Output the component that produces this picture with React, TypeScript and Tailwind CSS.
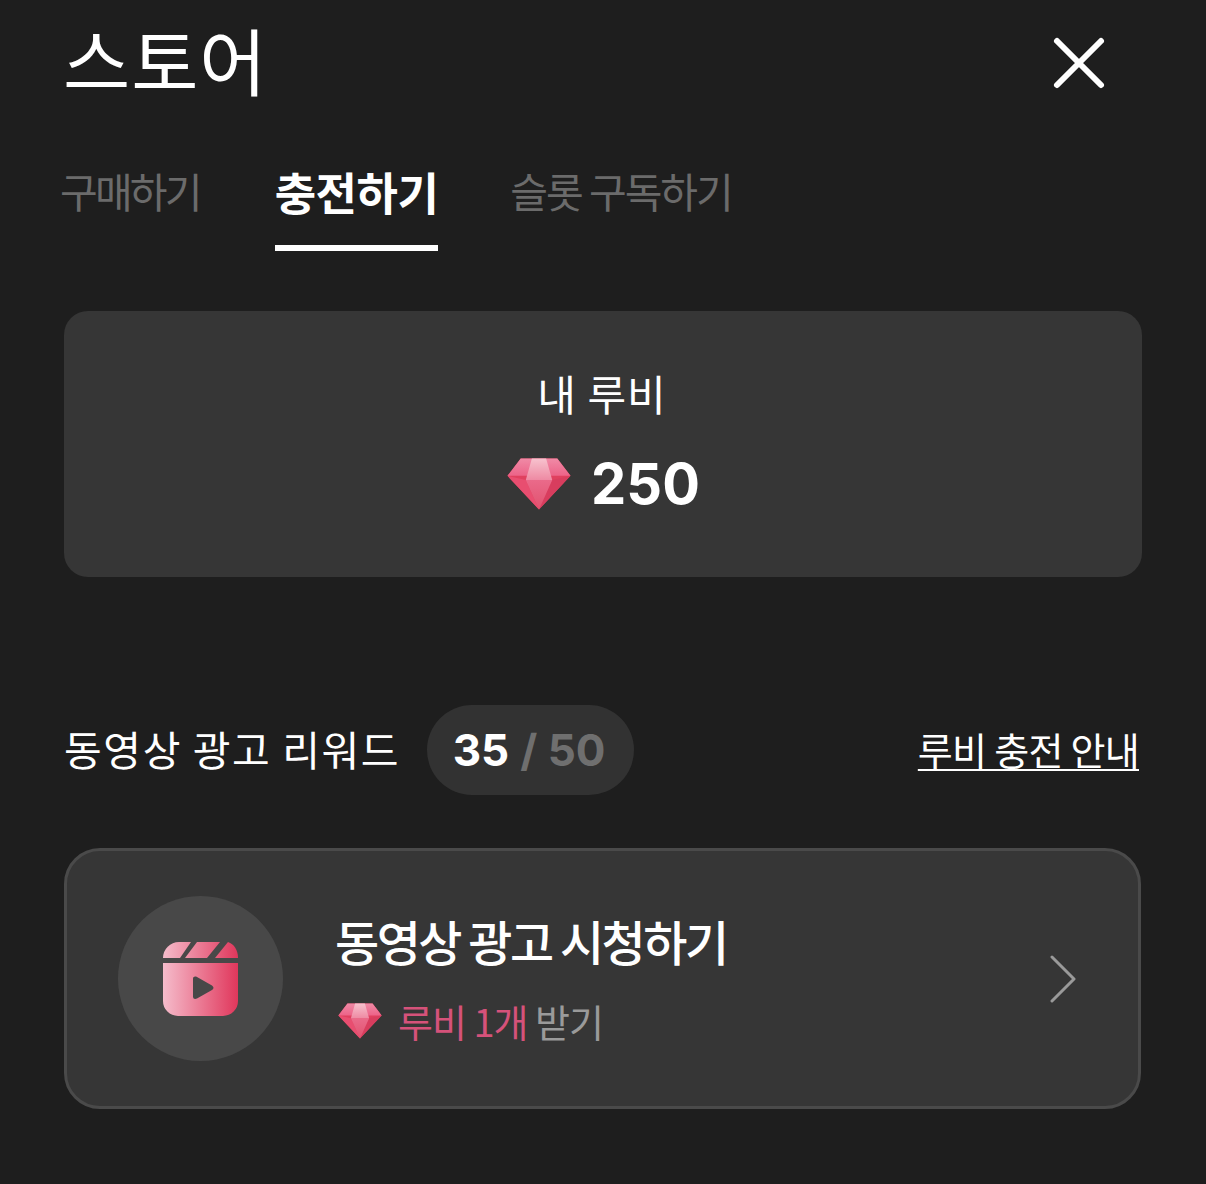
import React from "react";

function Ruby({ id, className }: { id: string; className: string }) {
  return (
    <svg viewBox="0.5 0.5 63 51" className={className}>
      <defs>
        <linearGradient id={id + "t"} x1="0" y1="0" x2="0" y2="1">
          <stop offset="0" stopColor="#f08aa6" />
          <stop offset="1" stopColor="#ec6388" />
        </linearGradient>
        <linearGradient id={id + "c"} x1="0" y1="0" x2="0" y2="1">
          <stop offset="0" stopColor="#f7c2ce" />
          <stop offset="1" stopColor="#ee8aa3" />
        </linearGradient>
        <linearGradient id={id + "l"} x1="0" y1="0" x2="0" y2="1">
          <stop offset="0" stopColor="#ea6a8a" />
          <stop offset="1" stopColor="#e1526f" />
        </linearGradient>
      </defs>
      <path d="M14 1H50L63 18L32 51L1 18Z" fill="#e0405f" />
      <path d="M14 1H50L63 18H1Z" fill={"url(#" + id + "t)"} />
      <path d="M1 18L19 22L32 51Z" fill="#e84e70" />
      <path d="M63 18L45 22L32 51Z" fill="#d83d5e" />
      <path d="M19 22H45L32 51Z" fill={"url(#" + id + "l)"} />
      <path d="M25 1H39L45 22H19Z" fill={"url(#" + id + "c)"} />
    </svg>
  );
}

function Reel() {
  return (
    <svg viewBox="0 0 76 76" className="w-[76px] h-[76px]">
      <defs>
        <linearGradient id="reel" gradientUnits="userSpaceOnUse" x1="0" y1="0" x2="76" y2="0">
          <stop offset="0" stopColor="#f5bccb" />
          <stop offset="1" stopColor="#e0355a" />
        </linearGradient>
      </defs>
      <path
        fill="url(#reel)"
        fillRule="evenodd"
        d="M0 22H75V60A15 15 0 0 1 60 75H15A15 15 0 0 1 0 60ZM30 38C30 35.500 32 35 34 36L49 44.500C51 46 51 47.500 49 49L34 57.500C32 58.500 30 58 30 55.500Z"
      />
      <path fill="url(#reel)" d="M0 17A16 16 0 0 1 16 1H28L17 17H0Z" />
      <path fill="url(#reel)" d="M34 1H57L44 17H22Z" />
      <path fill="url(#reel)" d="M65 1C71 3 75 9 75 17H52Z" />
    </svg>
  );
}

export default function App() {
  return (
    <div className="w-[1206px] h-[1184px] overflow-hidden bg-[#1e1e1e] text-white font-['Noto_Sans_CJK_KR','Noto_Sans',sans-serif]">
      <header className="h-[124px] pl-[63px] pr-[100px] flex items-center justify-between">
        <h1 className="text-[73px] leading-[124px] font-normal tracking-[1px] -mt-[2px] -translate-y-[3px]">스토어</h1>
        <svg viewBox="0 0 54 54" className="w-[54px] h-[54px] translate-y-[1px]" fill="none" stroke="#fff" strokeWidth="6" strokeLinecap="round">
          <path d="M5 5L49 49M49 5L5 49" />
        </svg>
      </header>
      <nav className="h-[126px] pl-[60px] flex items-start text-[41px]">
        <div className="mt-[38px] text-[#6b6b6b] leading-[56px] tracking-[-2.800px]">구매하기</div>
        <div className="ml-[75px] mt-[38px] h-[89px] border-b-[6px] border-white font-bold text-[45px] leading-[60px] tracking-[-0.500px] text-white">충전하기</div>
        <div className="ml-[72px] mt-[38px] text-[#6b6b6b] leading-[56px] tracking-[-2px]">슬롯 구독하기</div>
      </nav>
      <section className="mt-[61px] ml-[64px] w-[1078px] h-[266px] rounded-[24px] bg-[#363636] flex flex-col items-center pt-[56px]">
        <div className="text-[42px] leading-[52px] mr-[2px] tracking-[1px]">내 루비</div>
        <div className="mt-[32px] flex items-center gap-[20px] ml-[1px]">
          <Ruby id="a" className="w-[64px] h-[52px]" />
          <span className="text-[56px] leading-[66px] font-bold font-['Inter',sans-serif]">250</span>
        </div>
      </section>
      <section className="mt-[128px] ml-[64px] w-[1075px] h-[90px] flex items-center justify-between">
        <div className="flex items-center gap-[27px]">
          <span className="text-[41px] tracking-[1.600px] -translate-y-[1px]">동영상 광고 리워드</span>
          <div className="h-[90px] w-[207px] rounded-full bg-[#323232] pr-[3px] flex items-center justify-center text-[44px] font-bold font-['Inter',sans-serif]">
            <span>35</span>
            <span className="text-[#6f6f6f] ml-[11px]">/ 50</span>
          </div>
        </div>
        <span className="text-[38px] tracking-[-0.700px] underline underline-offset-[4px] decoration-[2px] -translate-y-[2px]">루비 충전 안내</span>
      </section>
      <section className="mt-[53px] ml-[64px] w-[1077px] h-[261px] rounded-[36px] border-[3px] border-[#4a4a4a] bg-[#363636] flex items-center pl-[51px] pr-[61px]">
        <div className="w-[165px] h-[165px] rounded-full bg-[#484848] flex items-center justify-center shrink-0">
          <Reel />
        </div>
        <div className="ml-[52px] flex-1 pb-[5px]">
          <div className="text-[48px] leading-[64px] font-medium tracking-[-2.500px]">동영상 광고 시청하기</div>
          <div className="mt-[25px] flex items-center gap-[16px] ml-[3px]">
            <Ruby id="b" className="w-[44px] h-[36px]" />
            <span className="text-[38px] leading-[48px] tracking-[-1px] text-[#d5527a]">
              루비 1개 <span className="text-[#9a9a9a]">받기</span>
            </span>
          </div>
        </div>
        <svg viewBox="0 0 28 48" className="w-[28px] h-[48px]" fill="none" stroke="#9a9a9a" strokeWidth="3" strokeLinecap="round" strokeLinejoin="round">
          <path d="M3 2L25 24L3 46" />
        </svg>
      </section>
    </div>
  );
}
